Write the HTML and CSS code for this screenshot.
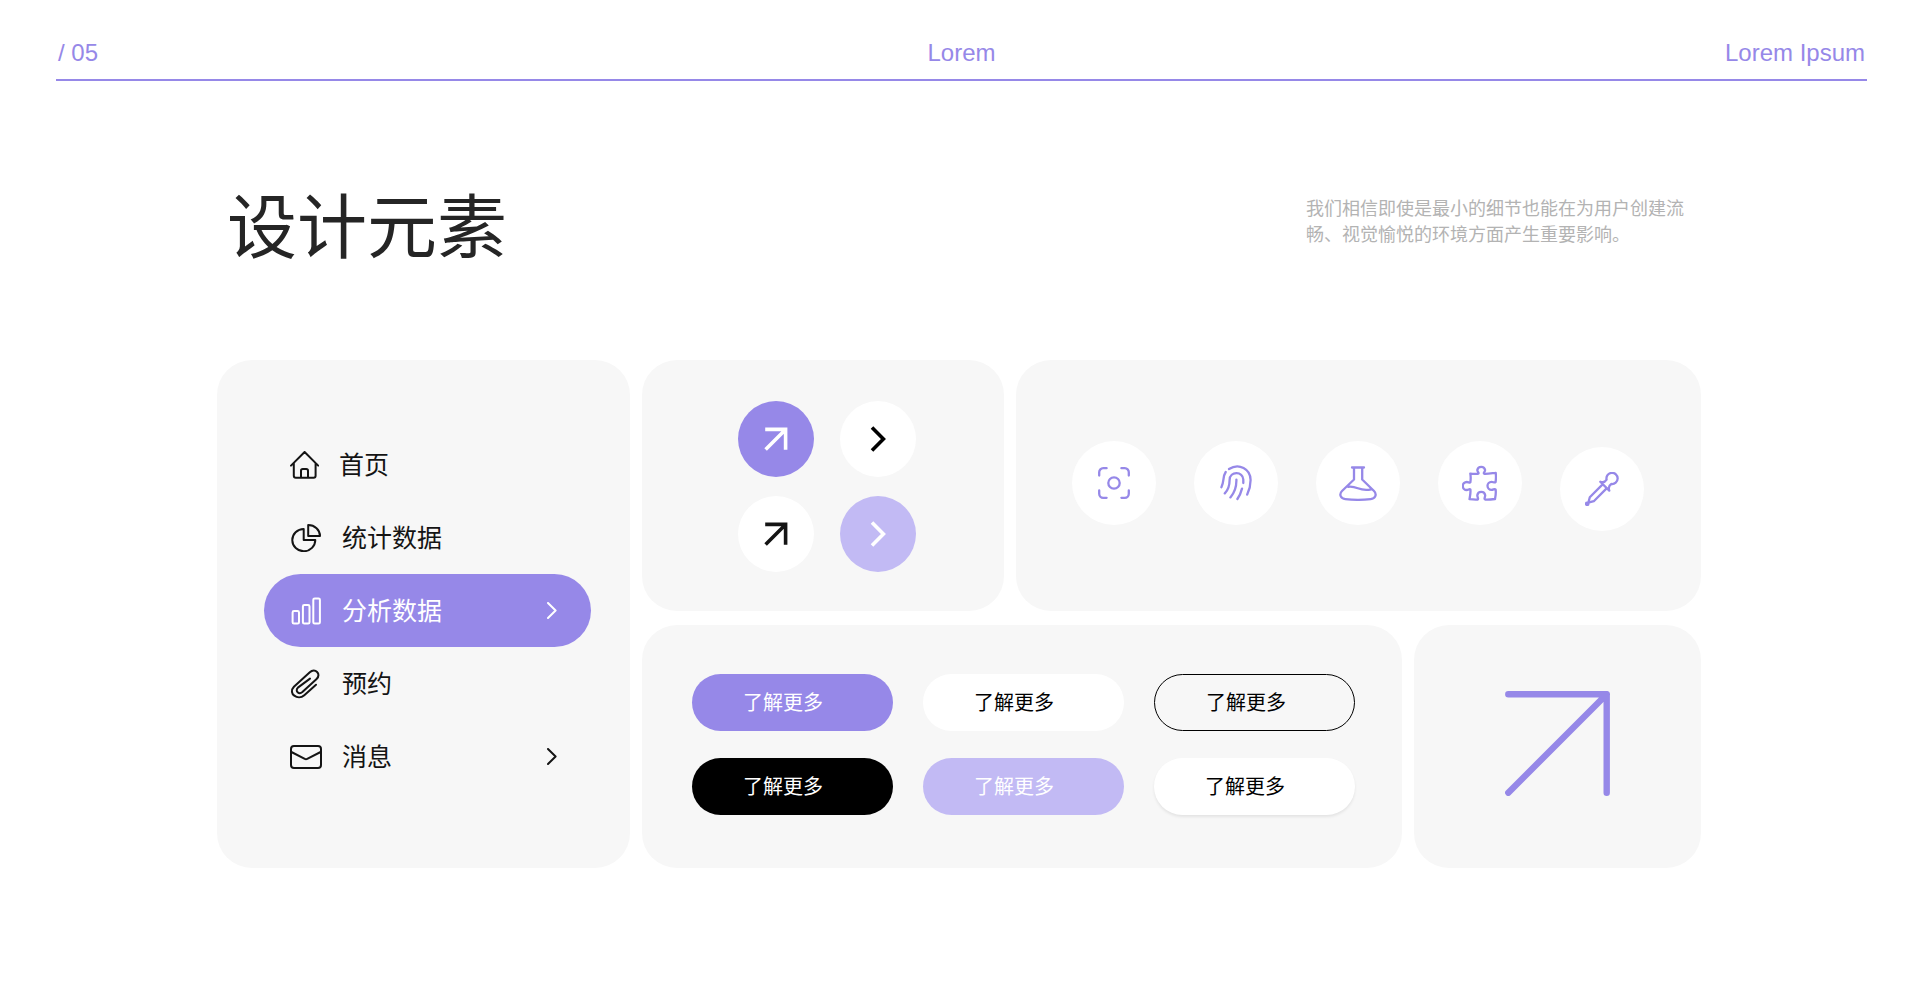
FILE: index.html
```html
<!DOCTYPE html>
<html lang="zh-CN">
<head>
    <meta charset="UTF-8">
    <meta name="viewport" content="width=device-width, initial-scale=1.0">
    <title>设计元素</title>
    <link rel="stylesheet" href="styles.css">
</head>
<body>
    <header class="page-header">
        <span>/ 05</span>
        <span>Lorem</span>
        <span class="header-right">Lorem Ipsum</span>
    </header>

    <main class="page">
        <section class="intro">
            <h1>设计元素</h1>
            <p>我们相信即使是最小的细节也能在为用户创建流畅、视觉愉悦的环境方面产生重要影响。</p>
        </section>

        <div class="board">
            <nav class="card menu">
                <a href="#home" class="menu-item">
                    <svg width="29" height="28" viewBox="0 0 29 28"><path d="M1 14.6L14.6 1l13.6 13.6M3.8 12v12.8a2 2 0 0 0 2 2h17.8a2 2 0 0 0 2-2V12M11 26.8v-7a1.8 1.8 0 0 1 1.8-1.8h3.4a1.8 1.8 0 0 1 1.8 1.8v7"/></svg>
                    <span>首页</span>
                </a>
                <a href="#stats" class="menu-item">
                    <svg width="32" height="28" viewBox="0 0 32 28"><path d="M13.7 5A11.5 11.1 0 1 0 25.3 16H13.7zM18.2 1A11.8 11 0 0 1 30 12H18.2z"/></svg>
                    <span>统计数据</span>
                </a>
                <a href="#analysis" class="menu-item active">
                    <svg width="32" height="28" viewBox="0 0 32 28"><rect x="2.6" y="14" width="6.4" height="12.6" rx="1.4"/><rect x="12.9" y="8" width="6.6" height="18.6" rx="1.4"/><rect x="23.3" y="1.4" width="6.6" height="25.2" rx="1.4"/></svg>
                    <span>分析数据</span>
                    <svg class="chevron" width="10" height="17" viewBox="0 0 10 17"><path d="M1 1l7.6 7.5L1 16"/></svg>
                </a>
                <a href="#booking" class="menu-item">
                    <svg width="32" height="30" viewBox="0 0 32 30"><path d="M26 15.7L14.3 26.2C7.8 31.8-2.4 24.6 3.9 17.8L19.8 3.2C25-1.5 31.8 5 26.6 9.9L12.4 23C9 26 4.6 22 7.9 18.6L20 9.6"/></svg>
                    <span>预约</span>
                </a>
                <a href="#messages" class="menu-item">
                    <svg width="32" height="24" viewBox="0 0 32 24"><rect x="1" y="1" width="30" height="22" rx="3"/><path d="M1.4 7l13.4 6.9q1.2.6 2.4 0L30.6 7"/></svg>
                    <span>消息</span>
                    <svg class="chevron" width="10" height="17" viewBox="0 0 10 17"><path d="M1 1l7.6 7.5L1 16"/></svg>
                </a>
            </nav>

            <div class="board-main">
                <div class="row row-top">
                    <section class="card rounds">
                        <button type="button" class="round purple" aria-label="打开">
                            <svg width="24" height="24" viewBox="0 0 24 24"><path d="M1.2 2.4h20.4v20.4M1.6 22.4l20-20"/></svg>
                        </button>
                        <button type="button" class="round white" aria-label="下一个">
                            <svg width="16" height="26" viewBox="0 0 16 26"><path d="M2 1.6L13.4 13 2 24.4"/></svg>
                        </button>
                        <button type="button" class="round white ink" aria-label="打开">
                            <svg width="24" height="24" viewBox="0 0 24 24"><path d="M1.2 2.4h20.4v20.4M1.6 22.4l20-20"/></svg>
                        </button>
                        <button type="button" class="round lilac" aria-label="下一个">
                            <svg width="16" height="26" viewBox="0 0 16 26"><path d="M2 1.6L13.4 13 2 24.4"/></svg>
                        </button>
                    </section>

                    <section class="card icons">
                        <span class="icon">
                            <svg width="32" height="32" viewBox="0 0 32 32"><path d="M1.2 8.600V5.200a4 4 0 0 1 4-4h3.400M23.400 1.200h3.400a4 4 0 0 1 4 4v3.400M30.800 23.400v3.400a4 4 0 0 1-4 4h-3.400M8.600 30.800H5.200a4 4 0 0 1-4-4v-3.400"/><circle cx="16" cy="16" r="5.700"/></svg>
                        </span>
                        <span class="icon">
                            <svg width="32" height="36" viewBox="0 0 32 36"><path d="M9 4C19-2.500 30.600 4 30.600 15c0 5-1.200 10-3.400 14.600M5.700 7C2.500 11.600 4.400 16.500 1.400 22.200M4.800 28.400c4.200-4.300 4.800-9 4.800-13.400 0-9 13.700-9 13.700-.4V18M16.400 14.600c.2 7.400-1.800 13-6 17.800M22 23.600c-1 4-2.400 7.200-4.600 10.400"/></svg>
                        </span>
                        <span class="icon">
                            <svg width="38" height="35" viewBox="0 0 38 35"><path d="M13 1.500h12M15 1.500v12L3 25c-3.200 3.200-1.400 7.600 3.300 8.100 8.400 1 17 1 25.400 0 4.700-.5 6.500-4.900 3.300-8.100L23.200 13.500v-12M9.400 20.800c9.600-1.100 10.600 5.200 22.800 2.500"/></svg>
                        </span>
                        <span class="icon">
                            <svg width="35" height="36" viewBox="0 0 35 36"><path d="M8.300 8.600c2.700.4 5.300.4 7.700.2 1.600-.8-.7-1.800-.7-3.800a4 4 0 0 1 7.800 0c0 2-2.300 3-.7 3.800 3.600.2 7.700-.6 11.300-1 .5 3.200.3 6.200-.1 9.200-1.100 1.300-2.100-.2-4.100-.2a4 4 0 0 0 0 8c2 0 3-1.500 4.100-.3.6 3.500-.1 6.500-.6 9.500-3 .4-7 .8-9.500.6-2-.6-.3-2.100-.3-4.300a4 4 0 0 0-7.900 0c0 2.200 1.700 3.700.2 4.300-2.500.2-5.500-.1-8-.4.500-3.200 1.300-6.200.9-9.600-.9-1.100-1.900.4-3.600.4a4 4 0 0 1 0-8c1.700 0 3 1.300 3.600.2.400-3.200.4-6.200-.1-8.600z"/></svg>
                        </span>
                        <span class="icon icon-low">
                            <svg width="34" height="34" viewBox="0 0 34 34"><path d="M15.300 9.700c2.300 1 4.700.5 6.300-2A5.600 5.600 0 1 1 26.300 12c-2.500 1.600-3 4-2 6.600zM17.600 12.400L4.800 25.200l-1.500 5.500 5.500-1.500L21.600 16.400"/><circle class="drop" cx="2.200" cy="31.800" r="1.200"/></svg>
                        </span>
                    </section>
                </div>

                <div class="row row-bottom">
                    <section class="card pills">
                        <button type="button" class="pill purple">了解更多</button>
                        <button type="button" class="pill white">了解更多</button>
                        <button type="button" class="pill outline">了解更多</button>
                        <button type="button" class="pill black">了解更多</button>
                        <button type="button" class="pill lilac">了解更多</button>
                        <button type="button" class="pill white raised">了解更多</button>
                    </section>

                    <section class="card arrow">
                        <svg width="105" height="105" viewBox="0 0 105 105"><path d="M3.300 3.300h98.400v98.400M3.300 101.700l98.400-98.400"/></svg>
                    </section>
                </div>
            </div>
        </div>
    </main>
</body>
</html>
```

FILE: styles.css
```css
* {
    box-sizing: border-box;
}
body {
    margin: 0;
    background: #ffffff;
    color: #141414;
    font-family: "Liberation Sans", "Noto Sans CJK SC", sans-serif;
}
svg {
    display: block;
    flex: none;
    fill: none;
    stroke: currentColor;
    stroke-width: 2;
    stroke-linecap: round;
    stroke-linejoin: round;
}
button {
    border: none;
    font-family: inherit;
    cursor: pointer;
}

/* header */
.page-header {
    display: grid;
    grid-template-columns: 1fr auto 1fr;
    margin: 0 54px 0 56px;
    padding: 39px 2px 12px;
    border-bottom: 2px solid #9688e8;
    color: #9688e8;
    font-size: 24px;
    line-height: 28px;
}
.header-right {
    text-align: right;
}

/* intro */
.page {
    padding: 0 220px 0 217px;
}
.intro {
    display: flex;
    justify-content: space-between;
    padding: 112px 17px 95px 10px;
}
h1 {
    margin: 0;
    color: #252525;
    font-size: 70px;
    font-weight: 400;
    line-height: 72px;
}
.intro p {
    width: 378px;
    margin: 3px 0 0;
    color: #b3b3b3;
    font-size: 18px;
    line-height: 26px;
}

/* board */
.board {
    display: grid;
    grid-template-columns: 413fr 1059fr;
    gap: 12px;
}
.board-main {
    display: grid;
    gap: 14px;
}
.row {
    display: grid;
    gap: 12px;
}
.row-top {
    grid-template-columns: 362fr 685fr;
}
.row-bottom {
    grid-template-columns: 760fr 287fr;
}
.card {
    background: #f7f7f7;
    border-radius: 35px;
}

/* menu */
.menu {
    padding: 68px 39px 74px 47px;
}
.menu-item {
    display: flex;
    align-items: center;
    gap: 20px;
    height: 73px;
    padding: 0 34px 0 26px;
    border-radius: 37px;
    color: #141414;
    font-size: 25px;
    text-decoration: none;
}
.menu-item span {
    padding-bottom: 3px;
}
.menu-item.active {
    background: #9688e8;
    color: #ffffff;
}
.menu-item .chevron {
    margin-left: auto;
}

/* round buttons */
.rounds {
    display: grid;
    grid-template-columns: 76px 76px;
    justify-content: center;
    align-content: center;
    gap: 19px 26px;
    padding: 41px 0 39px 8px;
}
.round {
    display: flex;
    align-items: center;
    justify-content: center;
    height: 76px;
    padding: 0;
    border-radius: 50%;
}
.round svg {
    stroke-width: 3.6;
    stroke-linecap: butt;
    stroke-linejoin: miter;
}

.purple {
    background: #9688e8;
    color: #ffffff;
}
.white {
    background: #ffffff;
    color: #000000;
}
.lilac {
    background: #c2baf4;
    color: #ffffff;
}
.black {
    background: #000000;
    color: #ffffff;
}
.ink {
    color: #141414;
}

/* icons */
.icons {
    display: flex;
    justify-content: center;
    gap: 38px;
    padding: 81px 2px 0 0;
}
.icon {
    display: flex;
    align-items: center;
    justify-content: center;
    width: 84px;
    height: 84px;
    border-radius: 50%;
    background: #ffffff;
    color: #9688e8;
}
.icon svg {
    stroke-width: 2.3;
}
.icon-low {
    margin-top: 6px;
}
.drop {
    fill: currentColor;
}

/* pill buttons */
.pills {
    display: grid;
    grid-template-columns: repeat(3, 1fr);
    gap: 27px 30px;
    padding: 49px 47px 53px 50px;
}
.pill {
    height: 57px;
    padding: 0 51px 2px;
    border-radius: 29px;
    font-size: 20px;
    text-align: left;
}
.outline {
    border: 1px solid #000000;
    background: transparent;
    color: #000000;
}
.raised {
    box-shadow: 0 2px 3px rgba(0, 0, 0, 0.08);
}

/* big arrow */
.arrow {
    display: flex;
    align-items: center;
    justify-content: center;
    padding-bottom: 7px;
    color: #9688e8;
}
.arrow svg {
    stroke-width: 6.4;
}
```
